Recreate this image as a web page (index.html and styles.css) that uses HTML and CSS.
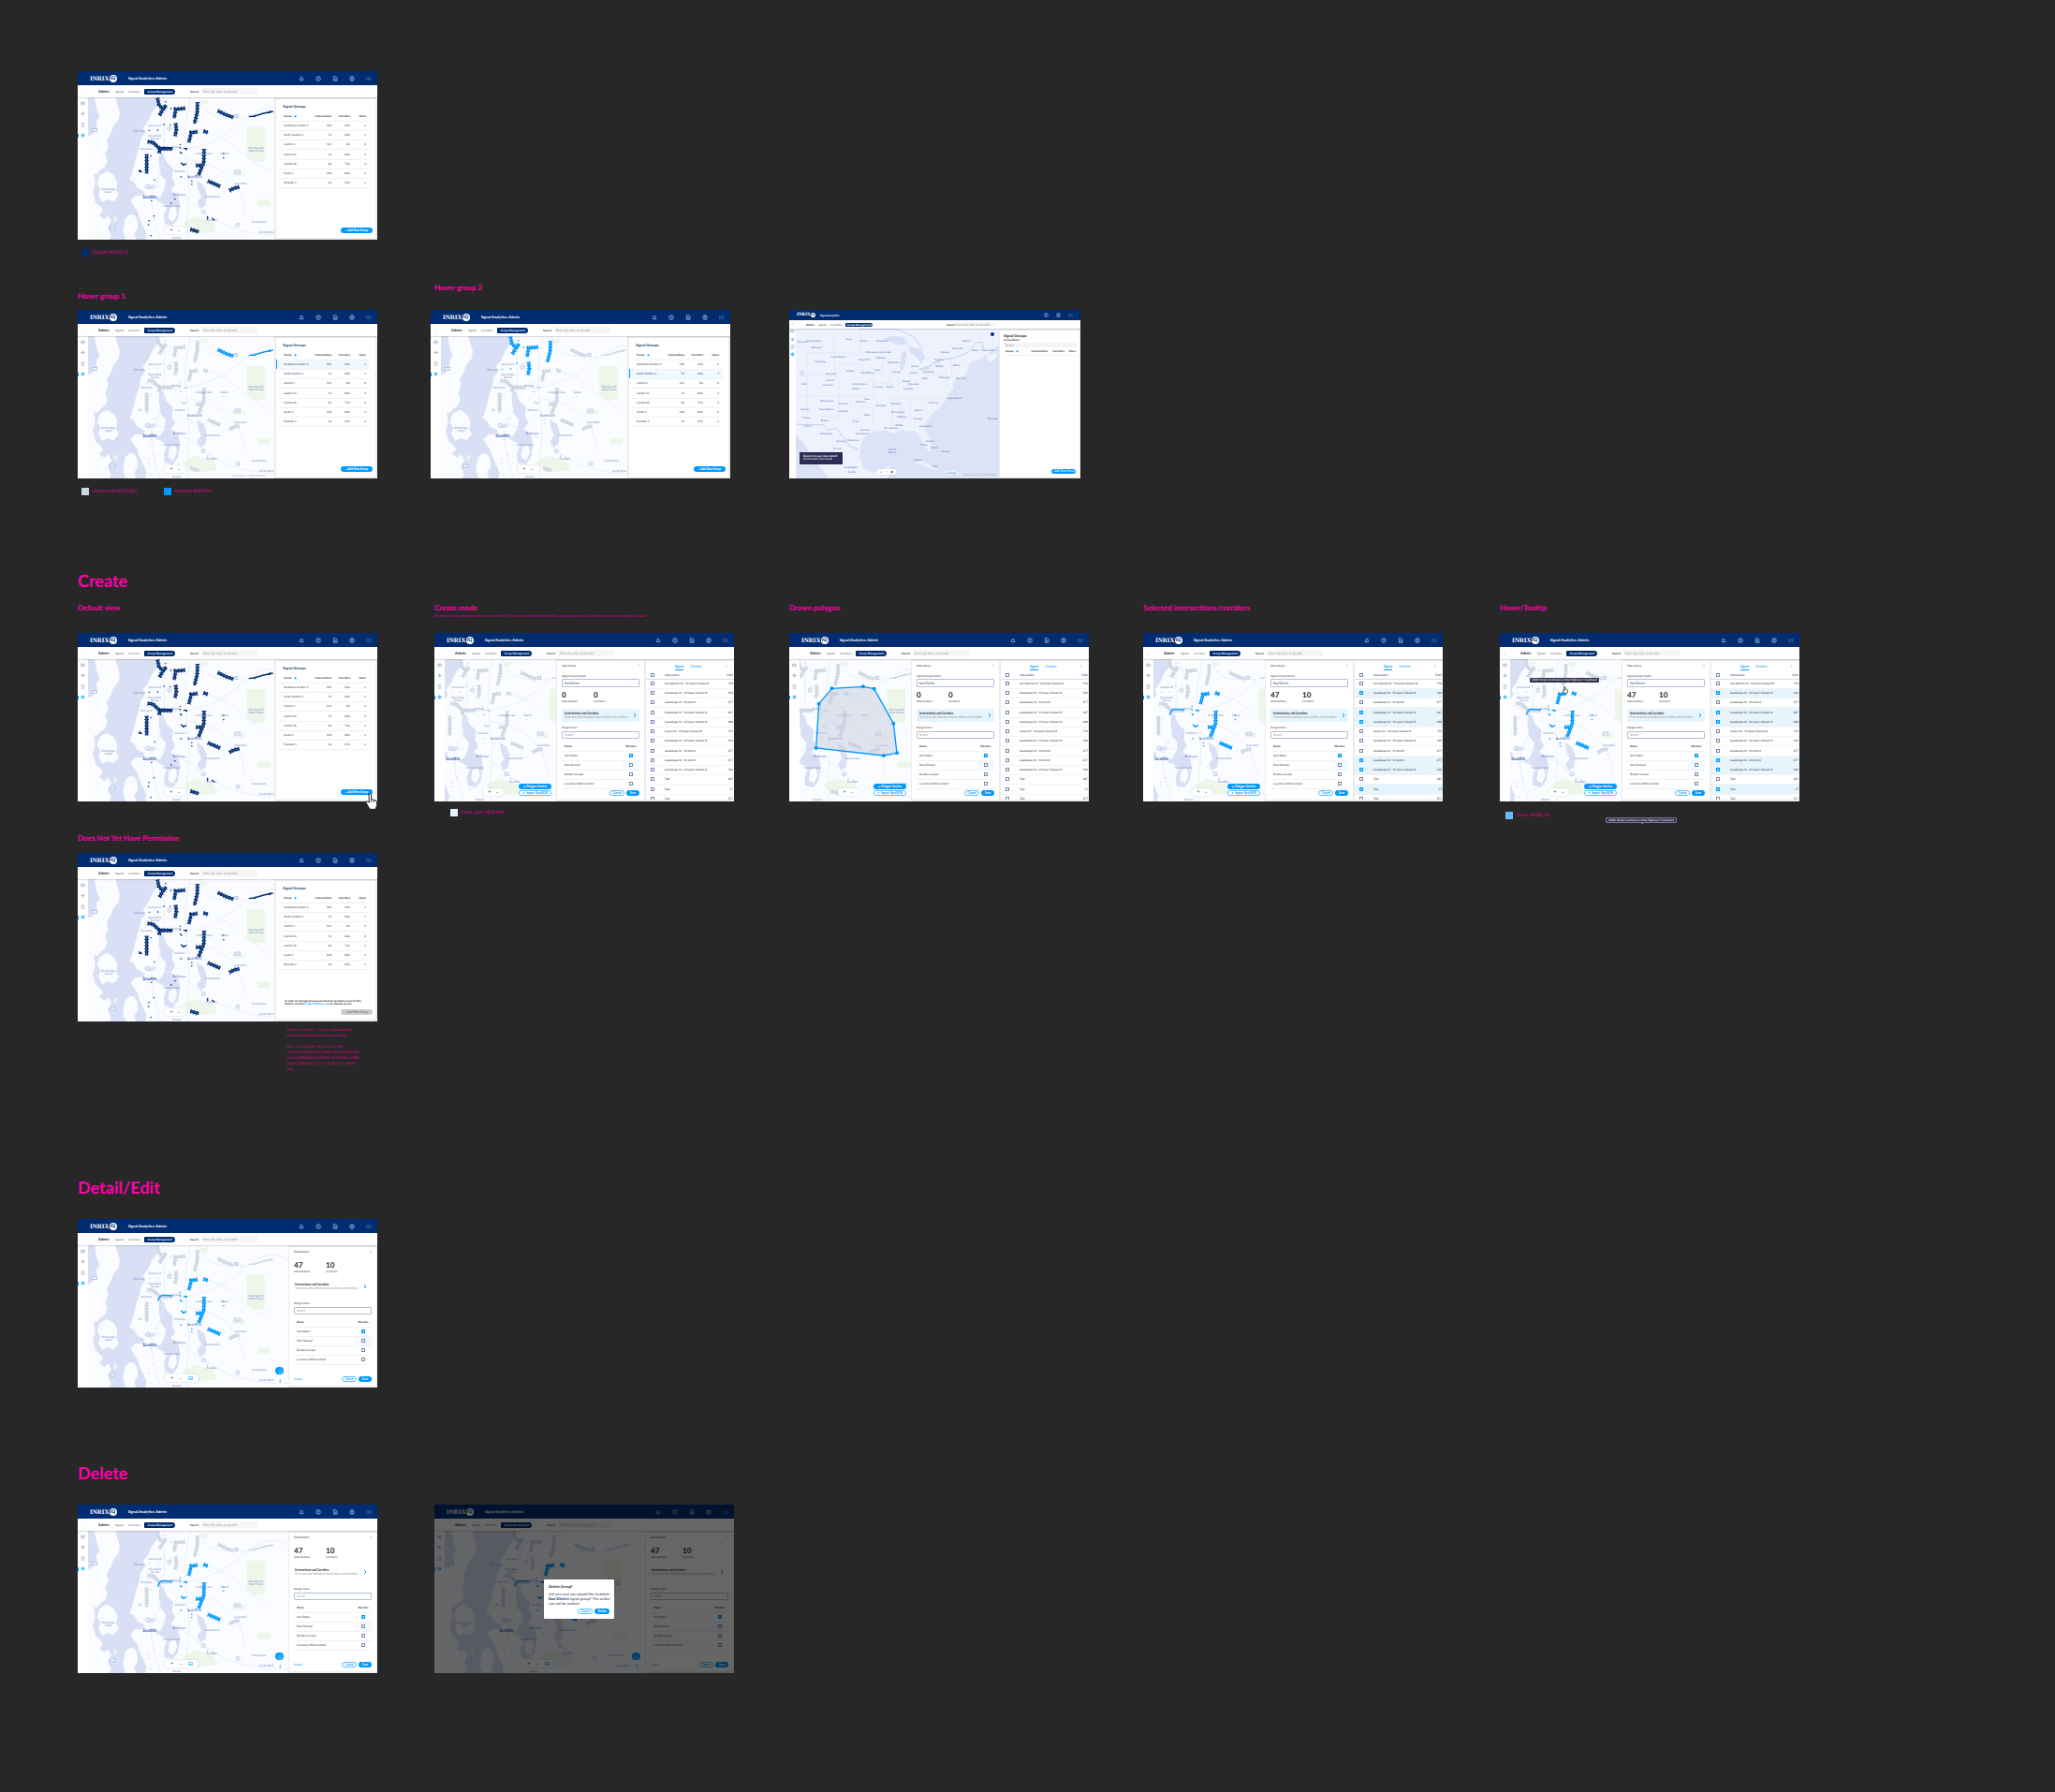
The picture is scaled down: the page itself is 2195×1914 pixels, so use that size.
FILE: index.html
```
<!DOCTYPE html>
<html lang="en">
<head>
<meta charset="utf-8">
<title>Signal Analytics Admin - Group Management</title>
<link rel="stylesheet" href="styles.css">
</head>
<body>
<main class="board">
  <section class="row overview">
    <figure>
      <div class="frame" data-view="list" data-tone="default"></div>
      <ul class="legend"><li><i class="swatch navy"></i>Default #002D72</li></ul>
    </figure>
  </section>

  <section class="row hover-row">
    <figure>
      <figcaption>Hover group 1</figcaption>
      <div class="frame" data-view="list" data-tone="northeast" data-hover="0" data-version="yes"></div>
      <ul class="legend">
        <li><i class="swatch unselected"></i>Unselected #CCD5E3</li>
        <li><i class="swatch selected"></i>Selected #0099FF</li>
      </ul>
    </figure>
    <figure>
      <figcaption class="raised">Hover group 2</figcaption>
      <div class="frame" data-view="list" data-tone="north" data-hover="1"></div>
    </figure>
    <figure>
      <div class="frame compact" data-view="country"></div>
    </figure>
  </section>

  <section class="chapter create">
    <h2>Create</h2>
    <div class="row">
      <figure>
        <figcaption>Default view</figcaption>
        <div class="frame" data-view="list" data-tone="default"></div>
        <svg class="pointer" viewBox="0 0 40 54" aria-hidden="true"><path d="M11 3q5-3 8 3v16q8-3 10 2q8-1 8 6v10l-5 12H14L2 31q0-6 6-4l4 4Z" fill="#fff" stroke="#222" stroke-width="3"/><path d="M19 22v8m8-7v8" stroke="#222" stroke-width="2"/></svg>
      </figure>
      <figure>
        <figcaption>Create mode <small>By default, the group’s creator is a member. They can be removed but both a group name and at least one user is required to save.</small></figcaption>
        <div class="frame" data-view="new" data-tone="none"></div>
        <ul class="legend inset"><li><i class="swatch open"></i>Panel open #E6F4FE</li></ul>
      </figure>
      <figure>
        <figcaption>Drawn polygon</figcaption>
        <div class="frame" data-view="new" data-tone="none" data-polygon="yes"></div>
      </figure>
      <figure>
        <figcaption>Selected intersections/corridors</figcaption>
        <div class="frame" data-view="new" data-tone="east" data-selected="yes"></div>
      </figure>
      <figure>
        <figcaption>Hover/Tooltip</figcaption>
        <div class="frame" data-view="new" data-tone="east" data-selected="yes" data-tooltip="yes"></div>
        <div class="tip-row">
          <ul class="legend"><li><i class="swatch hovered"></i>Hover #68BCFA</li></ul>
          <span class="tip">180th Street Southeast &amp; State Highway 9 Southeast</span>
        </div>
      </figure>
    </div>
  </section>

  <section class="row permission">
    <figure>
      <figcaption>Does Not Yet Have Permission</figcaption>
      <div class="frame" data-view="list" data-tone="default" data-locked="yes"></div>
      <div class="note">
        <p>Opens a ‘mailto:…’ link in a separate tab<br>with an email subject pre-populated:</p>
        <code>mailto:support@inrix.com?<br>subject=Request%20Access%20To%20<br>Group%20Admin%20Feature%20in%20S<br>ignal%20Analytics:%20[org name/<br>id]</code>
      </div>
    </figure>
  </section>

  <section class="chapter detail">
    <h2>Detail/Edit</h2>
    <div class="row">
      <figure><div class="frame" data-view="detail" data-tone="east"></div></figure>
    </div>
  </section>

  <section class="chapter delete">
    <h2>Delete</h2>
    <div class="row">
      <figure><div class="frame" data-view="detail" data-tone="east"></div></figure>
      <figure><div class="frame" data-view="detail" data-tone="east" data-modal="yes"></div></figure>
    </div>
  </section>
</main>
<script src="frames.js"></script>
</body>
</html>
```
FILE: styles.css
```
* { box-sizing: border-box; }
body {
  margin: 0;
  background: #272727;
  color: #2b3350;
  font-family: Lato, sans-serif;
  text-rendering: geometricPrecision;
}
button, input { font: inherit; color: inherit; margin: 0; padding: 0; border: 0; background: none; min-width: 0; }
figure, h2, h3, p, ul, dl, dd { margin: 0; padding: 0; }
a { text-decoration: none; }
table { border-collapse: collapse; }
th, td { padding: 0; font-weight: 400; text-align: left; }

/* Board */
.board { padding: 76px 83px 127px; min-height: 100vh; }
.row { display: grid; grid-template-columns: 381px 379px 378px 381px 320px; align-items: start; }
.row figure { position: relative; display: flex; flex-direction: column; }
.overview { height: 227px; }
.hover-row { grid-template-columns: 377px 383px 320px; height: 305px; }
.hover-row figure { padding-top: 28px; }
.hover-row figcaption { margin-top: -20px; height: 20px; }
.hover-row .raised { margin-top: -29px; height: 29px; padding-left: 4px; }
figcaption { height: 32px; color: #f0a; font-size: 8px; line-height: 10px; font-weight: 700; white-space: nowrap; }
figcaption small { display: block; color: #d6008f; font-size: 4px; line-height: 8px; font-weight: 400; }
h2 { color: #f0a; font-size: 18px; line-height: 24px; font-weight: 700; height: 36px; }
.create { height: 282px; }
.permission { height: 366px; }
.permission figcaption { height: 21px; }
.detail { height: 305px; }
.detail h2, .delete h2 { height: 46px; }
.legend { display: flex; list-style: none; padding: 10px 4px 0; color: #d6008f; font-size: 5px; line-height: 8px; white-space: nowrap; }
.legend li { display: flex; gap: 3px; width: 88px; }
.legend.inset { padding-left: 17px; padding-top: 8px; }
.swatch { width: 8px; height: 8px; }
.navy { background: #002d72; }
.unselected { background: #ccd5e3; }
.selected { background: #09f; }
.open { background: #e6f4fe; }
.hovered { background: #68bcfa; }
.tip-row { display: flex; align-items: end; }
.tip-row .legend { padding-left: 6px; padding-top: 11px; padding-bottom: 4px; width: 113px; }
.tip { position: relative; padding: 0 2px; border: 1px solid #777592; border-radius: 1px; background: #34314d; color: #fff; font-size: 3px; line-height: 4px; white-space: nowrap; }
.tip-row .tip::after { content: ""; position: absolute; left: 37px; top: 4px; width: 2px; height: 2px; background: #777592; }
.pointer { position: absolute; left: 307px; top: 203px; width: 14px; height: 18px; }
.note { width: 96px; margin: 6px 0 0 223px; color: #d6008f; font-size: 4px; line-height: 6px; white-space: nowrap; }
.note code { display: block; margin-top: 6px; font-family: "DejaVu Sans Mono", monospace; }

/* Application frame */
.frame {
  --off: #ccd5e3;
  --north: var(--off); --northeast: var(--off); --east: var(--off); --rest: var(--off);
  position: relative;
  display: grid;
  flex: none;
  grid-template-rows: 15px 13px 1fr;
  width: 320px;
  height: 180px;
  overflow: hidden;
  background: #fff;
  font-size: 3px;
  line-height: 4px;
}
.frame[data-tone="default"] { --off: #002d72; }
.frame[data-tone="north"] { --north: #09f; }
.frame[data-tone="northeast"] { --northeast: #09f; }
.frame[data-tone="east"] { --east: #09f; }
.topbar { display: flex; align-items: center; padding: 0 5px 0 13px; background: #002d72; color: #fff; }
.logo { font: 700 7px/8px "Liberation Serif", serif; }
.iq { width: 8px; height: 8px; border-radius: 50%; background: #fff; color: #002d72; font-weight: 900; font-size: 5px; line-height: 8px; text-align: center; }
.product { margin-left: 12px; font-size: 4px; font-weight: 700; }
.tools { display: flex; gap: 12px; margin-left: auto; padding-right: 1px; }
.tools svg { display: block; width: 6px; height: 6px; fill: none; stroke: #b9cbe8; stroke-width: 2; }
.subbar { position: relative; z-index: 2; display: flex; align-items: center; padding: 0 0 0 22px; background: #fff; box-shadow: 0 1px 1px #0002; }
.subbar h3 { width: 18px; font-size: 4px; color: #222; }
.subbar nav { display: flex; align-items: center; gap: 5px; }
.subbar a { color: #555; line-height: 6px; }
.subbar a.current { padding: 0 3px; border-radius: 1px 3px 3px 1px; background: #002d72; color: #fff; font-weight: 700; }
.subbar label { margin-left: 16px; width: 12px; color: #222; font-weight: 700; }
.subbar input { width: 60px; height: 7px; padding: 0 2px; background: #f6f6f6; }
input::placeholder { color: #999; opacity: 1; }
.body { display: grid; grid-template-columns: 11px 1fr auto; min-height: 0; }
.rail { position: relative; z-index: 3; display: flex; flex-direction: column; align-items: center; justify-content: space-between; align-self: start; height: 51px; margin-top: -8px; }
.rail svg { width: 5px; height: 5px; fill: none; stroke: #9daccc; stroke-width: 2; }
.rail .on { stroke: #3bf; fill: #9df; }
.rail::after { content: ""; position: absolute; left: 0; bottom: 0; width: 1px; height: 4px; background: #09f; }
.map { position: relative; overflow: hidden; background: #fafcff; }
.map > svg { display: block; width: 309px; height: 152px; }

/* Map drawing */
.water { fill: #d9e0f5; }
.land { fill: #fafcff; }
.park { fill: #edf6e9; }
.road { fill: none; stroke: #e3e8f6; stroke-width: 2; }
.place { fill: #6f87cb; font-size: 9px; text-anchor: middle; }
.place.big { font-size: 15px; fill: #3659b8; font-weight: 700; }
.place.mid { font-size: 11px; fill: #4f6fc4; }
.shield { fill: #eef2fc; stroke: #a5b4dd; stroke-width: 2; }
.corridor path { fill: none; }
.corridor .edge { stroke-width: 9; }
.corridor .ticks { stroke-width: 14; stroke-dasharray: 3 7; }
.corridor .thin { stroke-width: 4; }
.corridor .dots { stroke-width: 4; stroke-linecap: round; }
.north path { stroke: var(--north); }
.northeast path { stroke: var(--northeast); }
.east path { stroke: var(--east); }
.rest path { stroke: var(--rest); }
.corridor path.core { stroke: #fafcff88; stroke-width: 2; stroke-dasharray: 4 3; }
.drawn polygon { fill: #c6cde088; stroke: #09f; stroke-width: 4; }
.drawn circle { fill: #09f; }

/* Map controls */
.zoom { position: absolute; left: 82px; bottom: 6px; display: flex; justify-content: space-evenly; min-width: 22px; height: 8px; border-radius: 3px; background: #fff; box-shadow: 0 0 2px #0003; color: #445; font-size: 5px; line-height: 7px; }
.zoom button { line-height: 7px; }
.zoom svg { align-self: center; width: 5px; height: 4px; }
.zoom.wide { width: 36px; }
.version { position: absolute; right: 10px; bottom: 1px; color: #aaa; }
.map-actions { position: absolute; right: 5px; bottom: 6px; display: grid; gap: 1px; }
.pill { display: inline-block; padding: 0 3px; height: 6px; border-radius: 3px; background: #09f; color: #fff; font-weight: 700; line-height: 6px; white-space: nowrap; text-align: center; }
.pill.outline { background: #fff; color: #09f; border: 1px solid #5bbdff; line-height: 4px; }
.pill:disabled { background: #ccc; color: #888; }
.map-actions .pill { width: 35px; padding: 0; }
.round-actions { position: absolute; right: 5px; bottom: 3px; display: grid; gap: 3px; }
.round-actions button { width: 9px; height: 8px; border-radius: 4px; background: #fff; color: #09f; font-size: 5px; line-height: 6px; }
.round-actions .fill { background: #09f; color: #fff; }
.map .tip { position: absolute; left: 21px; top: 20px; border: 0; height: 5px; line-height: 5px; padding: 0 2px; }
.map .hand { position: absolute; left: 56px; top: 29px; width: 6px; height: 8px; }

/* Panels */
.side { display: flex; gap: 2px; padding: 2px 1px 2px 1px; background: #ececee; min-height: 0; }
.card { display: flex; flex-direction: column; min-height: 0; overflow: hidden; border-radius: 1px; background: #fff; }
.list-card { width: 106px; margin-left: 1px; margin-right: 1px; padding: 5px 3px 5px; }
.list-card h3 { margin: 0 0 3px 4px; color: #23376b; font-size: 4px; line-height: 5px; font-weight: 700; }
.groups { width: 97px; table-layout: fixed; }
.groups tr, .members tr { height: 10px; border-bottom: 1px solid #f1f1f4; }
.groups tbody tr:nth-child(4n) { height: 11px; }
.groups th { color: #222; font-weight: 700; }
.groups th, .groups td { text-align: right; white-space: nowrap; }
.groups th:first-child, .groups td:first-child { padding-left: 5px; text-align: left; }
.groups th:last-child, .groups td:last-child { padding-right: 4px; }
.groups .c1 { width: 37px; } .groups .c2 { width: 20px; } .groups .c3 { width: 21px; }
.groups .hover { background: #eff9ff; }
.groups .hover td:first-child { box-shadow: -2px 0 0 #eff9ff, -3px 0 0 #09f; }
.sort { margin-left: 3px; color: #09f; }
.list-card .pill { margin-top: auto; align-self: end; width: 34px; }
.locked { margin: auto 0 4px 6px; color: #222; font-weight: 700; line-height: 3px; white-space: nowrap; }
.locked a { color: #09f; }
.list-card .locked + .pill { margin-top: 0; }
.form-card { width: 93px; padding: 3px 5px 4px; }
.head { display: flex; justify-content: space-between; color: #222; margin-bottom: 7px; }
.head button { line-height: 4px; color: #888; font-size: 4px; }
.form-card .field { display: block; height: 5px; color: #333; flex: none; }
.form-card .text { width: 83px; height: 9px; padding: 0 2px; border: 1px solid #b4bed2; border-radius: 1px; flex: none; }
.counts { display: flex; margin: 4px 0 6px; }
.counts div { display: flex; flex-direction: column-reverse; width: 34px; }
.counts dd { color: #222; font-size: 8px; line-height: 9px; font-weight: 700; }
.expand { display: flex; align-items: center; justify-content: space-between; width: 83px; height: 14px; padding: 0 3px; border-radius: 1px; background: #e6f4fe; text-align: left; line-height: 4px; flex: none; }
.expand b, .expand small { display: block; }
.expand b { color: #222; }
.expand small { font-size: 3px; color: #999; white-space: nowrap; }
.expand svg { width: 4px; height: 6px; fill: none; stroke: #09f; stroke-width: 2; }
.form-card .assign { margin-top: 4px; height: 6px; }
.form-card .search { height: 8px; }
.members { width: 83px; margin-top: 3px; }
.members td:first-child, .members th:first-child { padding-left: 3px; }
.members th { font-weight: 700; }
.members td:last-child, .members th:last-child { width: 18px; text-align: center; }
.members .tint { background: #f3faff; }
.check { display: block; appearance: none; width: 4px; height: 4px; border: 1px solid #7289b0; background: #fff; }
.check:checked { border-color: #09f; background: #7cf; }
.members .check { margin: 0 auto; }
.foot { display: flex; gap: 2px; margin-top: auto; justify-content: flex-end; }
.foot a { margin-right: auto; color: #09f; line-height: 6px; }
.foot .outline { width: 16px; padding: 0; }
.foot .save { width: 14px; padding: 0; }
.detail-card .head { margin-bottom: 8px; }
.detail-card .counts { margin: 0 0 7px; }
.detail-card .expand { background: none; padding: 0 5px 0 1px; }
.detail-card .assign { margin-top: 9px; }
.signals-card { width: 94px; padding-top: 2px; margin-right: -1px; }
.tabs { display: flex; gap: 7px; padding-left: 31px; height: 9px; flex: none; color: #09f; }
.tabs button { height: 8px; color: #09f; }
.tabs .active { border-bottom: 1px solid #09f; font-weight: 700; }
.tabs .close { margin-left: 18px; color: #888; font-size: 4px; }
.signals { width: 94px; table-layout: fixed; }
.signals thead tr { height: 8px; border-bottom: 1px solid #d4dae8; }
.signals tbody tr { height: 10px; border-bottom: 1px solid #f3f3f5; }
.signals tbody tr:nth-child(4n) { height: 11px; }
.signals .c0 { width: 20px; } .signals .c2 { width: 12px; }
.signals .check { margin-left: 5px; }
.signals td:last-child, .signals th:last-child { text-align: right; padding-right: 1px; }
.signals td { color: #222; white-space: nowrap; }
.signals tbody .picked { background: #e6f4fe; }

/* Country view */
.compact { width: 311px; grid-template-rows: 11px 9px 1fr; }
.compact .topbar { padding-left: 8px; }
.compact .logo { font-size: 5px; }
.compact .iq { width: 5px; height: 5px; font-size: 3px; line-height: 5px; }
.compact .product { margin-left: 5px; font-size: 3px; }
.compact .tools { gap: 8px; padding-right: 3px; }
.compact .tools svg { width: 5px; height: 5px; }
.compact .subbar { padding-left: 18px; }
.compact .subbar h3 { width: 13px; font-size: 3px; }
.compact .subbar nav { gap: 4px; }
.compact .subbar a { line-height: 4px; }
.compact .subbar a.current { padding: 0 1px; }
.compact .subbar label { margin-left: auto; width: 9px; }
.compact .subbar input { width: 43px; height: 5px; padding: 0 1px; margin-right: 91px; }
.compact .body { grid-template-columns: 7px 1fr auto; }
.compact .rail { height: 38px; }
.compact .rail::after { display: none; }
.compact .map > svg { width: 217px; height: 160px; }
.country-water { fill: #dde3f6; }
.country-land { fill: #edf2fd; }
.state { fill: none; stroke: #cfd7ef; stroke-width: 1; }
.border { fill: none; stroke: #aebce3; stroke-width: 2; }
.city { fill: #4a68bd; font-size: 8px; text-anchor: middle; }
.toast { position: absolute; left: 4px; bottom: 15px; width: 46px; height: 13px; padding: 3px 4px; background: #2e2b55; color: #fff; line-height: 3px; white-space: nowrap; }
.toast b { display: block; }
.layer { position: absolute; right: 5px; top: 4px; width: 4px; height: 4px; border-radius: 50%; background: #002d72; }
.compact .zoom { left: 86px; bottom: 4px; height: 6px; line-height: 6px; font-size: 4px; }
.compact .zoom button { line-height: 6px; }
.compact .version { right: 3px; bottom: 2px; }
.compact .list-card { width: 85px; margin: 0; padding: 3px 4px 3px; }
.compact .list-card h3 { margin: 0; color: #222; }
.compact .list-card label { font-weight: 700; line-height: 5px; }
.compact .list-card .text { width: 78px; height: 5px; padding: 0 2px; background: #f4f4f6; flex: none; }
.compact .groups { width: 79px; }
.compact .groups tr { height: 8px; }
.compact .groups .c1 { width: 30px; } .compact .groups .c2 { width: 18px; } .compact .groups .c3 { width: 14px; }
.compact .groups th:first-child { padding-left: 2px; }
.compact .groups th:last-child { padding-right: 2px; }
.compact .list-card .pill { width: 26px; height: 5px; line-height: 5px; padding: 0; font-weight: 400; }

/* Delete confirmation */
.shade { position: absolute; inset: 0; z-index: 4; display: grid; place-items: start; padding: 80px 0 0 117px; background: #0009; }
.modal { width: 75px; height: 42px; padding: 5px; border-radius: 1px; background: #fff; font-size: 4px; line-height: 5px; white-space: nowrap; }
.modal h3 { margin-bottom: 3px; color: #222; font-size: 4px; line-height: 5px; }
.modal p { font-size: 4px; height: 18px; }
.modal b { color: #002d72; }
.modal .foot { font-size: 3px; }
.modal .foot .pill { width: 16px; padding: 0; }
```
FILE: frames.js
```
const TOOL_ICONS = [
  '<path d="M3 13h12q-2-2-2-5a4 4 0 0 0-8 0q0 3-2 5m5 2h3"/>',
  '<circle cx="9" cy="9" r="7"/><path d="M7 7q2-3 4 0q0 1-2 2v2m0 1v2"/>',
  '<path d="M4 2h7l4 4v10H4ZM7 9h5m-5 3h5"/>',
  '<circle cx="9" cy="9" r="7"/><circle cx="9" cy="7" r="2"/><path d="M5 14q4-5 8 0"/>',
  '<path d="M1 6h3m3 0h3m3 0h3M1 12h3m3 0h3m3 0h3"/>'
];
const RAIL_ICONS = [
  '<path d="m8 7 3 2-3 2"/>',
  '<path d="M2 4h14v10H2ZM2 8h14M8 4v10"/>',
  '<circle cx="9" cy="9" r="4"/><path d="M9 1v16M1 9h16"/>',
  '<path d="M4 2h10v14H4ZM7 6h4m-4 4h4"/>',
  '<circle cx="9" cy="9" r="6"/><path d="M9 3v12M3 9h12"/>'
];
const icon = (shape, cls = '') => `<svg viewBox="0 0 18 18" class="${cls}" aria-hidden="true">${shape}</svg>`;

const CORRIDORS = {
  north: {
    wide: 'M280 104L284 125L297 140L286 160M297 140L308 127M368 137L338 140L333 169M408 117L407 150L398 186M338 185L340 205L336 226',
    thin: '', dots: 'M322 138h1M305 116h1M280 207h1M253 208h1M300 189h1'
  },
  northeast: { wide: 'M473 145L497 157L523 166', thin: 'M572 164L590 162L620 153L650 147M640 145v8M592 158v8', dots: '' },
  rest: {
    wide: 'M248 244L265 246L286 266L328 267M285 280L290 265M245 284V346M510 401L525 393L542 389M385 525L412 533',
    thin: 'M220 335l10 6M220 340h10', dots: 'M320 190h1M258 290h1M270 367h1M323 441h1M260 433h1M268 482h1M252 497h1M250 510h1M310 520h1M258 545h1M335 428h1M440 484v8M455 490l6 5'
  },
  east: {
    wide: 'M408 212L388 215L380 246M427 210L441 215M429 267L428 310L411 352M403 320H426M441 370L480 387',
    thin: 'M281 281Q284 265 296 262L328 264M363 266h10v5M352 277l6 6M355 311l8 8 9-5', dots: 'M352 253h1M355 357h1M389 370h1M389 380h1M491 282h1M491 296h1M403 353h1M380 358h1M352 264h1'
  }
};

const PLACES = [
  ['Edmonds', 221, 213], ['Lynnwood', 271, 194], ['Mountlake', 271, 227], ['Terrace', 271, 236], ['Shoreline', 244, 269],
  ['Bothell', 340, 265], ['Kirkland', 351, 341], ['Cottage Lake', 428, 286], ['Duvall', 494, 284], ['Redmond', 398, 359, 'mid'],
  ['Bellevue', 350, 416, 'mid'], ['Seattle', 255, 427, 'big'], ['Mercer Island', 325, 454], ['Sammamish', 455, 422], ['Carnation', 546, 381],
  ['Marckworth', 595, 267], ['State Forest', 595, 277], ['Issaquah', 453, 498], ['Snoqualmie', 604, 503], ['North Bend', 628, 538],
  ['Renton', 342, 555], ['Bainbridge', 122, 398], ['Island', 122, 408]
];

function corridor(name) {
  const c = CORRIDORS[name];
  return `<g class="corridor ${name}"><path class="edge" d="${c.wide}"/><path class="ticks" d="${c.wide}"/><path class="core" d="${c.wide}"/><path class="thin" d="${c.thin}"/><path class="dots" d="${c.dots}"/></g>`;
}

function cityMap(shift, right, polygon) {
  const points = [[388, 196], [488, 190], [523, 197], [585, 308], [596, 403], [554, 411], [337, 387], [346, 245]];
  const places = PLACES.filter(p => p[1] > 57 + shift + 20 && p[1] < right);
  return `<svg viewBox="${57 + shift} 102 927 456" role="img" aria-label="Map of the Seattle area">
  <path class="water" d="M57 102H286L280 125L262 150L250 178L233 200L240 215L226 235L222 262L212 290L205 320L198 345L190 365L203 372L215 392L240 404L232 416L208 418L194 432L203 450L215 465L222 490L235 515L245 540L240 558H57Z"/>
  <path class="land" d="M78 102H145L152 130L159 150L155 175L138 195L131 215L117 240L122 262L112 285L119 305L112 325L96 335L86 348L76 345L80 380L72 405L82 440L97 452L105 465L93 480L110 492L122 480L132 500L120 520L131 545L125 558H57V225L68 222L85 205L84 180L94 165L85 140Z"/>
  <path class="land" d="M95 350L118 338L140 352L152 375L147 400L156 415L140 436L120 430L102 438L90 415L97 395L86 378ZM176 490L190 478L203 478L214 492L217 520L205 540L211 558H178L169 530Z"/>
  <path class="water" d="M286 276L300 284L308 310L330 330L326 360L337 380L322 400L347 420L352 450L345 492L328 514L303 508L300 480L311 450L290 438L272 430L290 420L303 395L306 370L290 350L284 310ZM405 368L428 384L437 410L434 448L418 460L406 440L420 420L410 398ZM245 388L268 382L275 392L252 398Z"/>
  <path class="land" d="M318 458L336 450L342 475L330 500L314 490Z"/>
  <path class="park" d="M565 197H623V307H590L565 290ZM520 340h40v14h-40ZM360 505l40-20 60 18 10 30-80 5ZM140 484h10v14h-10ZM420 110h20v14h-20ZM700 210h60v90h-60ZM600 430h40v20h-40ZM545 165h14v8h-14Z"/>
  <path class="road" d="M297 102Q305 190 300 270T262 400Q255 470 290 558M385 102Q360 200 372 300T380 430Q370 500 378 558M238 250Q320 280 400 262T560 175T700 150M250 380Q340 395 430 470T700 545M415 102Q430 180 540 165M372 300Q450 310 500 350T560 470M440 215Q510 230 560 290L640 340"/>
  <g class="shield"><circle cx="318" cy="202" r="6"/><circle cx="247" cy="388" r="6"/><circle cx="427" cy="470" r="6"/><circle cx="537" cy="511" r="6"/><rect x="528" y="336" width="16" height="9"/><rect x="70" y="202" width="16" height="9"/><rect x="128" y="513" width="16" height="9"/><rect x="528" y="157" width="9" height="10"/></g>
  ${['rest', 'east', 'northeast', 'north'].map(corridor).join('')}
  ${places.map(([t, x, y, c = '']) => `<text class="place ${c}" x="${x}" y="${y}">${t}</text>`).join('')}
  ${polygon ? `<g class="drawn"><polygon points="${points.join(' ')}"/>${points.map(p => `<circle cx="${p[0]}" cy="${p[1]}" r="6"/>`).join('')}</g>` : ''}
  </svg>`;
}

const CITIES = [
  ['Montana', 66, 140], ['North Dakota', 102, 136], ['Bismarck', 112, 156], ['South Dakota', 181, 187], ['Wyoming', 123, 201], ['Fargo', 215, 130],
  ['Minneapolis', 290, 172], ['Duluth', 262, 136], ['Wisconsin', 322, 137], ['Green Bay', 332, 172], ['Madison', 318, 189], ['Sioux Falls', 264, 196],
  ['Milwaukee', 358, 205], ['Omaha', 220, 232], ['Iowa', 306, 228], ['Des Moines', 275, 237], ['Chicago', 367, 236], ['Detroit', 427, 218],
  ['Toronto', 503, 195], ['Ottawa', 522, 172], ['Montréal', 563, 160], ['Québec', 592, 136], ['Maine', 620, 167], ['Nova Scotia', 660, 166],
  ['Buffalo', 505, 216], ['Albany', 560, 213], ['Cleveland', 470, 234], ['Toledo', 423, 239], ['New York', 574, 256], ['Pittsburgh', 520, 254],
  ['Ohio', 458, 255], ['Indiana', 398, 264], ['Columbus', 422, 273], ['Louisville', 405, 288], ['Illinois', 347, 282], ['United States', 249, 274],
  ['Kansas', 237, 288], ['Cheyenne', 158, 240], ['Denver', 157, 262], ['Colorado', 148, 276], ['Utah', 72, 275], ['St. Louis', 310, 283],
  ['Virginia Beach', 553, 319], ['Nashville', 364, 338], ['Memphis', 318, 342], ['Charlotte', 487, 335], ['Tulsa', 273, 322], ['Arkansas', 252, 330],
  ['Albuquerque', 145, 329], ['New Mexico', 143, 354], ['Amarillo', 197, 337], ['Lubbock', 196, 362], ['Dallas', 273, 374], ['Texas', 237, 394],
  ['Birmingham', 373, 364], ['Atlanta', 437, 359], ['Alabama', 384, 378], ['Jacksonville', 460, 410], ['New Orleans', 350, 416], ['Houston', 266, 421],
  ['San Antonio', 258, 434], ['El Paso', 138, 390], ['Arizona', 74, 356], ['Tucson', 79, 383], ['Sonora', 83, 409], ['Chihuahua', 141, 432],
  ['Monterrey', 228, 453], ['Durango', 190, 458], ['Tampa', 455, 468], ['Miami', 489, 479], ['Orlando', 474, 457], ['Nassau', 525, 491],
  ['Gulf of', 354, 483], ['Mexico', 354, 494], ['Havana', 436, 516], ['Cuba', 490, 538], ['Bermuda', 676, 386], ['Santiago', 543, 558],
  ['Guadalajara', 222, 542], ['Puebla', 225, 555], ['Torreón', 178, 481], ['Georgia', 436, 386], ['Mobile', 376, 406]
];
const countryMap = () => `<svg viewBox="45 94 651 480" role="img" aria-label="Map of the United States">
  <path class="country-water" d="M45 94H696V574H45Z"/>
  <path class="country-land" d="M45 94H696V148L672 158L664 172L640 190L612 200L600 208L596 230L588 242L560 254L548 270L552 285L535 300L530 318L508 345L480 368L464 392L456 410L470 440L480 468L474 488L462 478L444 440L424 420L400 424L385 418L360 430L330 420L290 425L262 444L252 470L250 505L262 540L290 556L318 548L345 535L352 550L340 574H150L110 520L70 470L45 430ZM420 525L450 518L480 532L505 548L480 544L450 530ZM522 552l30-4 20 12-40 4ZM655 180l30-8 8 8-20 22-14-4Z"/>
  <path class="water" d="M318 134L352 116L392 122L402 142L372 148L348 136ZM384 172L400 164L396 206L386 230L378 220ZM404 150L446 160L460 186L446 206L430 184L412 172ZM436 228L480 212L472 226ZM476 206L512 196L504 206ZM45 440L60 450L100 505L130 560L90 530L45 480ZM56 228h14l4 14-14 6Z"/>
  <path class="state" d="M80 171H169V243H80ZM45 150H80M169 94V171M169 206H250M169 243L182 260V309M82 243V309H293M293 236V309M45 309H82V400M182 309V376H132V400M221 309V340L293 348M250 110L262 236H318M293 348V400M348 210V290M372 240V300M410 240V290M293 270H350L372 300M340 318H530M354 318V410M384 330V420M412 330V400M440 318L470 370M169 171L250 176M460 240H530V280M545 190V250M318 236L330 170L300 130"/>
  <path class="border" d="M45 400L82 402L132 402L150 420L172 412L190 432L218 470L246 482M248 96H300L370 96L420 118L450 158M440 225L478 212L500 196L560 186L598 170L620 140L640 136L650 165"/>
  ${CITIES.map(([t, x, y]) => `<text class="city" x="${x}" y="${y}">${t}</text>`).join('')}
</svg>`;

const topbar = (compact) => `<header class="topbar"><span class="logo">INRIX</span><span class="iq">IQ</span>
  <span class="product">${compact ? 'Signal Analytics' : 'Signal Analytics: Admin'}</span>
  <div class="tools">${(compact ? [1, 3, 4] : [0, 1, 2, 3, 4]).map(i => icon(TOOL_ICONS[i])).join('')}</div></header>`;
const subbar = (id) => `<div class="subbar"><h3>Admin</h3><nav><a href="#">Signals</a><a href="#">Corridors</a><a href="#" class="current">Group Management</a></nav>
  <label for="place-${id}">Search</label><input id="place-${id}" type="text" placeholder="Enter city, state, or zip code"></div>`;
const rail = () => `<nav class="rail" aria-label="Sections">${RAIL_ICONS.map((s, i) => icon(s, i === 4 ? 'on' : '')).join('')}</nav>`;
const zoom = (extra = '', left = 0, cls = '') => `<div class="zoom ${cls}"${left ? ` style="left:${left}px"` : ''}><button type="button" aria-label="Zoom in">+</button><button type="button" aria-label="Zoom out">−</button>${extra}</div>`;

const GROUPS = [
  ['Northeast Section 1', '141', '61%', 2], ['North Section 2', '52', '68%', 3], ['Central 1', '123', '8%', 8], ['Central 1a', '56', '80%', 4],
  ['Central 1b', '82', '71%', 4], ['South 2', '104', '88%', 2], ['Eastside 3', '20', '65%', 2]
];
const groupsTable = (rows, hover) => `<table class="groups"><colgroup><col><col class="c1"><col class="c2"><col class="c3"></colgroup>
  <thead><tr><th>Group<span class="sort">◆</span></th><th>Intersections</th><th>Corridors</th><th>Users</th></tr></thead>
  <tbody>${rows.map((r, i) => `<tr${String(i) === hover ? ' class="hover"' : ''}>${r.map(v => `<td>${v}</td>`).join('')}</tr>`).join('')}</tbody></table>`;

function listView(d) {
  return `<div class="map">${cityMap(0, 640)}${zoom()}${d.version ? '<span class="version">Map version: 2118-W0324</span>' : ''}</div>
  <aside class="side"><section class="card list-card"><h3>Signal Groups</h3>${groupsTable(GROUPS, d.hover)}
  ${d.locked ? '<p class="locked">In order to manage groups you must be granted access to this<br>feature. Contact <a href="#">support@inrix.com</a> to request access.</p>' : ''}
  <button type="button" class="pill"${d.locked ? ' disabled' : ''}>+ Add New Group</button></section></aside>`;
}

function form(id, filled, detail) {
  const users = ['Nick Baker', 'Ram Dhanjal', 'Bradley Cooper', 'Courtney Millersonfield'];
  return `<section class="card form-card ${detail ? 'detail-card' : ''}">
  <div class="head"><span>${detail ? 'East District' : 'New Group'}</span><button type="button" aria-label="Close">×</button></div>
  ${detail ? '' : `<label class="field" for="name-${id}">Signal Group Name*</label><input class="text" id="name-${id}" type="text" value="East District">`}
  <dl class="counts"><div><dt>Intersections</dt><dd>${filled ? 47 : 0}</dd></div><div><dt>Corridors</dt><dd>${filled ? 10 : 0}</dd></div></dl>
  <button type="button" class="expand"><span><b>Intersections and Corridors</b><small>View and edit individual intersections and corridors</small></span><svg viewBox="0 0 8 12"><path d="m2 2 4 4-4 4"/></svg></button>
  <label class="field assign" for="user-${id}">Assign Users</label><input class="text search" id="user-${id}" type="text" placeholder="Search">
  <table class="members"><thead><tr><th>Name</th><th>Member</th></tr></thead><tbody>
  ${users.map((u, i) => `<tr><td>${u}</td><td${i === 1 ? ' class="tint"' : ''}><input class="check" type="checkbox" aria-label="${u}"${i ? '' : ' checked'}></td></tr>`).join('')}</tbody></table>
  <div class="foot">${detail ? '<a href="#">Delete</a>' : ''}<button type="button" class="pill outline">Cancel</button><button type="button" class="pill save">Save</button></div></section>`;
}

const G = 'Guadalupe St / W Cesar Chavez St', S = 'Guadalupe St / W 2nd St';
const SIGNALS = [['San Antonio St / W Cesar Chavez St', 950], [G, 906], [S, 877], [G, 867], [G, 848], ['Lavaca St / W Cesar Chavez St', 799], [G, 906], [S, 877], [S, 877], [G, 906], ['Test', 487], ['Test', 97], ['Test', 477]];
function signals(selected) {
  const picked = selected ? [1, 3, 4, 8, 9, 11] : [];
  return `<section class="card signals-card"><div class="tabs"><button type="button" class="active">Signals</button><button type="button">Corridors</button><button type="button" class="close" aria-label="Close">×</button></div>
  <table class="signals"><colgroup><col class="c0"><col><col class="c2"></colgroup><thead><tr><th><input class="check" type="checkbox" aria-label="Select all"></th><th>Intersection</th><th>POIS</th></tr></thead>
  <tbody>${SIGNALS.map(([n, v], i) => { const on = picked.includes(i); return `<tr${on ? ' class="picked"' : ''}><td><input class="check" type="checkbox" aria-label="${n}"${on ? ' checked' : ''}></td><td>${n}</td><td>${v}</td></tr>`; }).join('')}</tbody></table></section>`;
}

function newView(d, id) {
  const tip = '<span class="tip">180th Street Southeast &amp; State Highway 9 Southeast</span><svg class="hand" viewBox="0 0 40 54"><path d="M11 3q5-3 8 3v16q8-3 10 2q8-1 8 6v10l-5 12H14L2 31q0-6 6-4l4 4Z" fill="#fff" stroke="#222" stroke-width="5"/></svg>';
  const shift = d.polygon ? 227 : 172;
  return `<div class="map">${cityMap(shift, shift + 390, d.polygon)}${zoom('', 41)}
  <div class="map-actions"><button type="button" class="pill">⬠ Polygon Gestion</button><button type="button" class="pill outline">↥ Import GeoJSON</button></div>${d.tooltip ? tip : ''}</div>
  <aside class="side">${form(id, d.selected)}${signals(d.selected)}</aside>`;
}

function detailView(d, id) {
  return `<div class="map">${cityMap(0, 690)}${zoom('<svg viewBox="0 0 10 8"><path d="M1 1h8v4H1ZM0 7h10" fill="none" stroke="#09f"/></svg>', 0, 'wide')}
  <div class="round-actions"><button type="button" class="fill" aria-label="Draw polygon">⬠</button><button type="button" aria-label="Import">↥</button></div></div>
  <aside class="side">${form(id, true, true)}</aside>`;
}

function countryView(d, id) {
  return `<div class="map">${countryMap()}<i class="layer"></i><div class="toast"><b>Zoom in to see more detail!</b>Zoom level is too broad</div>${zoom('<button type="button" aria-label="Layers">◈</button>')}<span class="version">Map version: 2118-W0324</span></div>
  <aside class="side"><section class="card list-card"><h3>Signal Groups</h3><label for="group-${id}">Group Name</label><input class="text" id="group-${id}" type="text" placeholder="Search">${groupsTable([])}
  <button type="button" class="pill">+ Add New Group</button></section></aside>`;
}

const MODAL = `<div class="shade"><div class="modal" role="dialog" aria-label="Delete Group?"><h3>Delete Group?</h3>
  <p>Are you sure you would like to delete<br><b>East District</b> signal group? This action<br>can not be undone.</p>
  <div class="foot"><button type="button" class="pill outline">Cancel</button><button type="button" class="pill">Delete</button></div></div></div>`;

const VIEWS = { list: listView, new: newView, detail: detailView, country: countryView };
document.querySelectorAll('.frame').forEach((frame, id) => {
  const d = frame.dataset;
  frame.innerHTML = topbar(d.view === 'country') + subbar(id) + `<div class="body">${rail()}${VIEWS[d.view](d, id)}</div>` + (d.modal ? MODAL : '');
});
```
